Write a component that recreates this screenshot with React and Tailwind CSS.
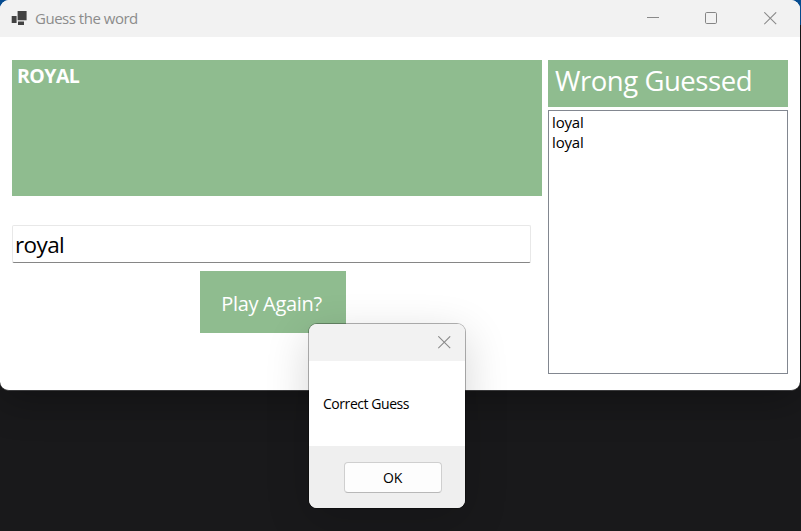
function CloseIcon() {
  return (
    <svg width="13" height="13" viewBox="0 0 13 13" fill="none" stroke="#8a8a8a" strokeWidth="1.1">
      <path d="M.3 .3 12.2 12.2M12.2 .3 .3 12.2" />
    </svg>
  );
}

function TitleBar() {
  return (
    <header className="flex h-[37px] items-center bg-[#f2f2f2] pl-[11px]">
      <svg width="17" height="16" viewBox="0 0 17 16" fill="#424242" className="shrink-0">
        <path d="M.7 5h4.9v7H.7zM6.6 0h9v9.3H6.6zM7 10.4h6v3.5H7z" />
      </svg>
      <h1 className="ml-[7px] -mt-px text-[15px] leading-5 tracking-[-0.48px] text-[#8c8c8c]">Guess the word</h1>
      <div className="ml-auto flex items-center pr-[23px]">
        <svg width="13" height="13" viewBox="0 0 13 13" stroke="#8a8a8a">
          <path d="M0 5.5h12" />
        </svg>
        <svg width="13" height="13" viewBox="0 0 13 13" fill="none" stroke="#858585" className="ml-[45px]">
          <rect x=".5" y=".5" width="11" height="11" rx="1.2" />
        </svg>
        <span className="ml-[46px]">
          <CloseIcon />
        </span>
      </div>
    </header>
  );
}

function MessageBox() {
  return (
    <div className="absolute top-[323px] left-[308px] flex h-[186px] w-[158px] flex-col overflow-hidden rounded-[9px] border border-black/30 bg-white bg-clip-padding shadow-[0_12px_44px_rgba(0,0,0,0.16)]">
      <div className="flex h-[37px] shrink-0 items-center justify-end bg-[#f2f2f2] pr-[14px]">
        <CloseIcon />
      </div>
      <p className="flex h-[85px] shrink-0 items-center pb-px pl-[14px] text-[14px] tracking-[-0.45px] text-black">Correct Guess</p>
      <div className="flex flex-1 items-start justify-end bg-[#efefef] pt-4 pr-[23px]">
        <button className="flex h-[31px] w-[98px] items-center justify-center rounded-[4px] border border-[#cfcfcf] border-b-[#b8b8b8] bg-[#fdfdfd] pr-px pb-px text-[14px] tracking-[-0.3px] text-black">
          OK
        </button>
      </div>
    </div>
  );
}

export default function App() {
  const wrongGuesses = ["loyal", "loyal"];
  return (
    <div className="relative h-[531px] w-[801px] overflow-hidden bg-[linear-gradient(#07519a_0px,#07519a_25px,#19191b_25px)] font-['Open_Sans','Noto_Sans',sans-serif]">
      <main className="flex h-[391px] w-[800px] flex-col overflow-hidden rounded-[9px] border-b border-[#3b3b3d] bg-white shadow-[0_8px_40px_rgba(0,0,0,0.3)]">
        <TitleBar />
        <div className="flex gap-[6px] pt-[23px] pl-3">
          <section className="flex w-[530px] flex-col">
            <div className="h-[136px] bg-[#8fbc8f] pt-[4px] pl-[5px] text-[19.5px] leading-6 font-bold tracking-[-0.55px] text-white">ROYAL</div>
            <div className="mt-[29px] flex h-[38px] w-[519px] items-center rounded-[2px] border border-[#e8e8e8] border-b-[#868686] pt-px pl-[2px] text-[22.5px] tracking-[-0.6px] text-black">
              royal
            </div>
            <button className="mt-2 ml-[188px] flex h-[62px] w-[146px] items-center justify-center bg-[#8fbc8f] pt-[4px] pr-[3px] text-[20px] tracking-[-0.3px] text-white">
              Play Again?
            </button>
          </section>
          <section className="flex w-[240px] flex-col">
            <h2 className="h-[47px] bg-[#8fbc8f] pt-[3px] pl-[7px] text-[27.5px] leading-[36px] tracking-[-0.45px] text-white">Wrong Guessed</h2>
            <ul className="mt-[3px] h-[264px] border border-[#828790] pt-px pl-[3px] text-[15px] leading-5 tracking-[-0.15px] text-black">
              {wrongGuesses.map((word, i) => (
                <li key={i}>{word}</li>
              ))}
            </ul>
          </section>
        </div>
      </main>
      <MessageBox />
    </div>
  );
}
